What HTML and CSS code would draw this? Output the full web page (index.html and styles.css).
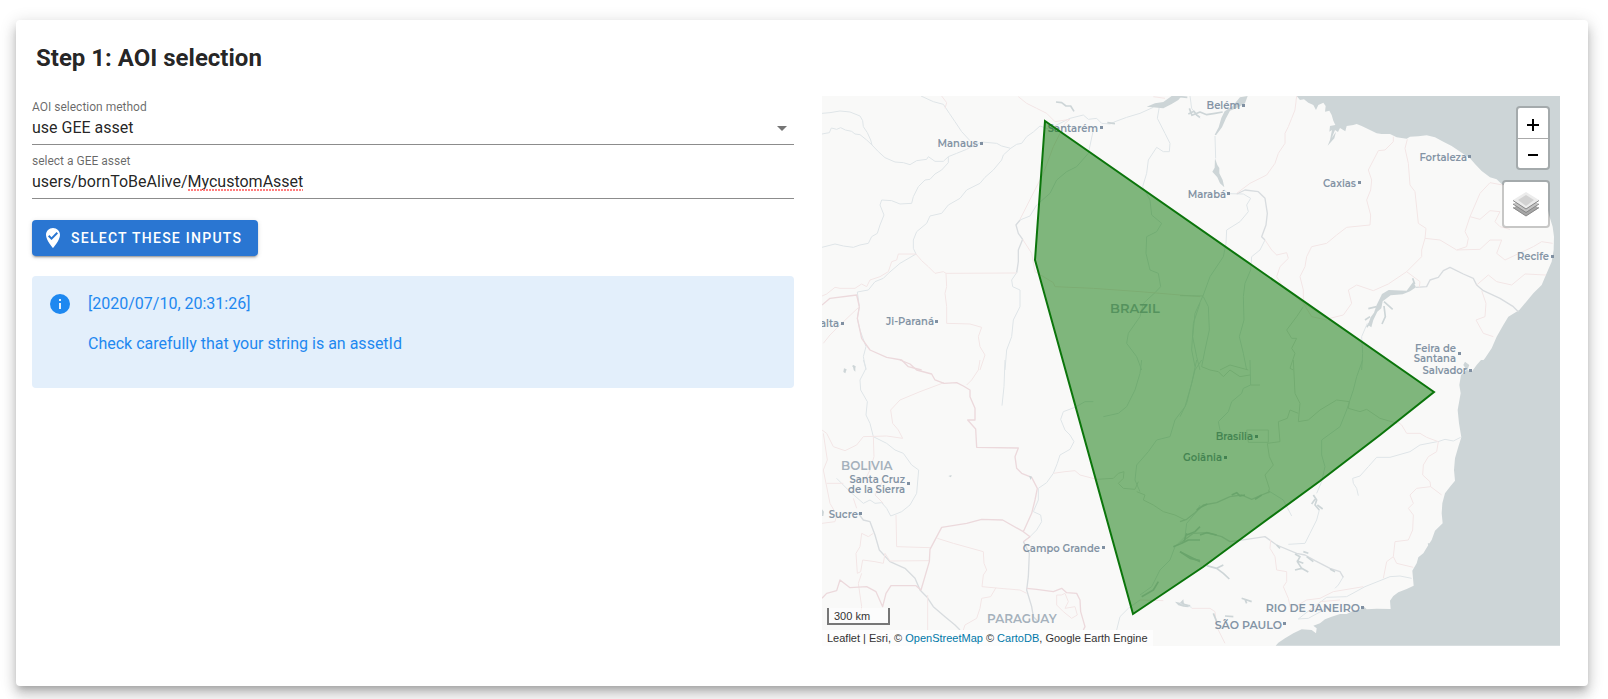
FILE: index.html
```html
<!DOCTYPE html>
<html lang="en">
<head>
<meta charset="utf-8">
<title>Step 1: AOI selection</title>
<link rel="stylesheet" href="styles.css">
</head>
<body>
<main class="card">
  <h1 class="card-title">Step 1: AOI selection</h1>
  <div class="columns">
    <section class="form">
      <div class="field">
        <label class="field-label" for="method">AOI selection method</label>
        <select class="field-input" id="method"><option>use GEE asset</option></select>
        <svg class="caret" viewBox="0 0 10 5" aria-hidden="true"><path d="M0 0h10L5 5z"/></svg>
      </div>
      <div class="field">
        <label class="field-label" for="asset">select a GEE asset</label>
        <input class="field-input" id="asset" type="text" value="users/bornToBeAlive/MycustomAsset">
        <span class="spell-mark"></span>
      </div>
      <button class="submit" type="button">
        <svg class="submit-icon" viewBox="0 0 24 24" aria-hidden="true"><path d="M12 2C8.1 2 5 5.1 5 9c0 5.300 7 13 7 13s7-7.700 7-13c0-3.900-3.100-7-7-7m-1.500 12L7 10.500l1.400-1.400 2.100 2.100 5.100-5.200L17 7.400z"/></svg>
        <span>SELECT THESE INPUTS</span>
      </button>
      <div class="alert" role="alert">
        <svg class="alert-icon" viewBox="0 0 24 24" aria-hidden="true"><path d="M13 9h-2V7h2m0 10h-2v-6h2m-1-9A10 10 0 0 0 2 12a10 10 0 0 0 10 10 10 10 0 0 0 10-10A10 10 0 0 0 12 2z"/></svg>
        <div class="alert-body">
          <p>[2020/07/10, 20:31:26]</p>
          <p>Check carefully that your string is an assetId</p>
        </div>
      </div>
    </section>

    <section class="map" aria-label="Map">
      <svg class="map-canvas" viewBox="822 96 738 550" preserveAspectRatio="xMidYMid slice">
        <!-- north-west -->
        <g transform="translate(820 90) scale(.33333)">
          <g class="river">
            <path d="M6 70L30 68 60 63 90 66 120 78 128 92 130 110 142 128 152 150 156 165"/>
            <path d="M6 132L28 128 34 114 50 118 62 113 76 120 95 124 105 132 120 134 140 150 156 165 175 185 195 203 225 216 250 218 270 224 290 212 320 208 325 200 345 214 370 214 385 200 410 190 440 178 450 172 485 156 530 160 545 168 572 175 590 163 605 160 620 140 640 126 660 108 685 117 720 100 750 85 790 75 805 88 830 85 845 100 870 102 885 95 920 82 960 70 1000 52"/>
            <path d="M303 18L340 35 370 43 388 70 405 95 425 125 450 152"/>
            <path d="M385 200L385 218 365 240 345 252 330 268 315 270 295 290 280 320 275 340 240 342 215 332 185 330 180 345 192 375 180 405 172 430 155 440 145 460 120 465 100 472 70 468 45 462 6 472"/>
            <path d="M572 175L550 195 545 210 520 240 495 262 480 280 440 300 420 325 385 345 365 370 330 378 320 400 290 425 280 450 280 475 288 492 240 520 205 550 190 565 165 575 145 600 112 606 118 650 112 685 120 720 138 770"/>
            <path d="M820 120L805 190 770 230 740 245 710 270 690 310 650 345 630 378 600 390 588 405"/>
            <path class="strong" d="M600 390L588 405 595 430 608 448 595 480 595 515 590 548"/>
            <path d="M590 548L575 570 578 590 600 600 600 650 580 690 575 740 560 780 555 840M138 770L130 800 138 840"/>
            <path d="M1018 50L1012 85 1035 130 1050 160 1048 185 1030 185 1010 172 985 210 980 250 968 290 990 330 995 375 1025 400 1010 425 980 440 978 490 990 540 1015 550 1022 590 1005 608 970 640 960 680 925 730 920 760 950 800 965 840M1110 18L1115 55 1130 75 1140 85"/>
            <path d="M1140 640L1120 700 1115 780 1125 830"/>
          </g>
          <g class="border">
            <path d="M365 18L380 38 375 55M595 20L620 40 650 55 680 70 705 95 750 88 735 100 700 170 670 250 600 388M608 448L635 490 645 545 700 578 705 590 820 595 960 605 1140 620M1000 20L1035 25"/>
            <path d="M288 492L235 492 230 510 215 515 205 545 180 560 150 570 140 590 125 582 105 595 60 595 45 592 20 612 6 618M288 492L305 512 325 530 345 550 370 545 378 550 590 549M378 550L380 590 375 610 380 650 380 700 450 702 485 712 475 740 480 770 495 795 480 840"/>
            <path class="strong" d="M6 645L30 625 110 615 118 650 112 685 125 745 150 780 200 802 245 810 265 830 305 840"/>
            <path d="M118 650L60 705 30 735 10 760"/>
          </g>
          <path class="water" d="M980 50L1005 40 1030 36 1055 18 1085 18 1075 30 1055 42 1030 55z"/>
          <path class="river-thick" d="M708 36L725 38 738 48 752 48 762 64M1105 72L1122 64 1130 75 1140 82M862 98L885 101M98 828L106 832"/>
        </g>

        <!-- north-east -->
        <g transform="translate(1180 90) scale(.33333)">
          <path class="ocean" d="M350 18L360 30 372 28 385 38 400 45 408 60 415 45 430 38 437 48 435 65 448 62 455 75 460 92 466 105 450 108 448 125 456 120 450 150 443 167 463 145 468 125 455 145 465 120 474 126 480 114 496 124 500 108 520 105 530 102 545 108 570 120 590 130 605 132 630 132 650 142 680 146 690 140 715 139 740 136 765 142 790 155 815 168 845 188 870 205 885 222 905 243 930 262 950 268 968 285 1040 290 1090 300 1100 340 1107 375 1118 410 1122 440 1121 480 1115 515 1100 550 1085 585 1060 610 1050 622 1018 660 985 680 970 705 950 740 935 775 915 805 890 835 880 840H1140V18z"/>
          <path class="water" d="M203 18L195 40 175 52 150 62 138 85 126 112 108 136 104 134 116 112 124 84 134 64 158 48 180 22zM105 205L112 225 118 234 118 250 128 270 133 292 120 280 112 262 97 245 104 233zM700 575L708 592 690 604 668 613 632 616 608 634 604 655 592 665 580 690 574 712 564 705 572 682 582 668 590 645 606 612 626 600 680 602z"/>
          <path class="river-thick" d="M28 55L36 76 60 66 80 74 105 70 128 66M0 20L22 22M698 565L704 582M612 635L638 658M612 648L616 680 606 702M570 680L555 690M575 690L560 712M590 650L565 656M925 820L945 818 960 830"/>
          <g class="river">
            <path d="M105 138L107 205M133 300L145 311 190 312 212 325 200 345 205 365 180 395 140 420 138 460 130 500 90 560 70 615 45 670 38 740 50 800 60 840"/>
            <path class="strong" d="M170 312L195 300 235 305 255 325 262 370 258 405 245 440 255 450"/>
            <path d="M255 450L240 480 215 500 212 540 195 580 190 620 192 690 178 740 190 790 200 840M70 620L85 650 88 720 75 780 65 830M562 700L545 740 548 790 545 840"/>
            <path class="strong" d="M708 592L740 590 750 570 775 562 790 542 810 532 850 552 880 565 890 585 910 602 960 625 1000 650 1015 665"/>
          </g>
          <g class="border">
            <path d="M350 18L345 60 335 85 325 110 315 130 315 160 295 190 285 220 260 255 210 280 170 310M255 450L275 480 290 495 320 488 325 505 300 530 290 560 305 585 370 640 440 685M640 140L640 155 615 180 595 182 565 240 575 270 572 300 560 330 572 375 570 405 500 412 470 435 440 460 395 470 380 500 375 530 360 560 370 600 370 640M682 148L675 175 685 220 690 285 705 305 715 400 738 415 735 445 725 480 725 500 680 545 625 582 580 602 530 585 505 600 515 640 490 675 450 685"/>
            <path d="M735 445L780 450 830 480 860 470 865 445 855 425 870 380 900 310 930 278 968 285M870 380L900 388 930 362 960 365 945 395 960 410 990 418M830 480L900 478 930 450 965 450 950 490 975 510 1060 470 1085 455 1118 460M680 545L720 575 718 592M890 585L925 555 950 575 995 585 1035 552 1098 555M905 602L918 640 915 680 888 690 910 730 940 740M370 640L395 680 440 690"/>
          </g>
          <g class="border gray"><path d="M0 617L70 618M370 650L350 680 320 720 335 745 350 745 335 775 345 790 330 835 340 840M120 840L150 825 205 840"/></g>
        </g>

        <!-- south-west -->
        <g transform="translate(820 360) scale(.33333)">
          <g class="river">
            <path d="M130 0L138 25 120 60 122 90 142 125 138 165 150 190 160 230 200 250 225 270 250 280 275 315 296 330 290 400 270 435 245 455 228 462 212 468 200 445 185 428 165 430 150 420 130 430 90 395 50 355"/>
            <path d="M555 0L552 80 546 137M820 125L795 125 765 142 730 155 722 178 735 210 750 225 762 245 750 268 720 285 712 310 700 340 680 368 655 385 655 420 640 455 662 465 665 485 650 510 630 530 610 545M965 0L960 40 945 90 920 140 895 160 850 170"/>
            <path class="strong" d="M115 460L130 480 150 485 165 525 178 570 210 605 255 625 285 655 300 690 320 710 340 740 375 770 405 795 420 810M610 545L628 580 625 650 620 690 635 740 640 770 655 785"/>
            <path d="M890 810L900 770 925 745 960 720"/>
            <path d="M1130 0L1115 70 1095 140 1065 180 1050 230 1010 240 985 275 950 315 945 360 960 395M1140 435L1130 455 1100 490 1095 530 1065 560 1050 600 1020 630 995 680 960 705"/>
          </g>
          <g class="border">
            <path d="M372 68L300 95 240 120 212 150 218 190 235 210 248 235 200 228 130 230 110 255 75 272 40 260 20 220 6 210M160 230L162 290 150 330 135 360M10 220L22 300 10 330 22 390 30 430 50 465 45 485 6 490M20 370L70 370M228 465L230 560 330 563M210 603L328 602M160 520L145 530 125 520 120 560 108 580 112 640 122 635 128 600 165 605 190 610 195 580 210 603M125 640L115 670 125 740 120 770M323 705V810M352 535L400 550 490 575 492 610 500 630 490 645 486 680 540 685 600 690 620 700M528 683L512 710 485 715 480 745 470 775 435 795 430 810M480 0L475 30 455 60 440 75M100 415L110 445M190 360L165 405 190 430"/>
            <path class="strong" d="M240 0L270 12 290 30 335 42 345 60 372 70 410 68 430 78 450 90 450 110 465 145 465 180 443 180 467 207 470 262 595 264 585 290 590 325 605 340 635 352 652 385 645 420 635 460 610 515 548 480 485 478 440 490 365 502 330 568 328 605 303 690 288 677 213 677 198 700 188 740 168 695 140 680 90 683 60 660 50 692 20 700 6 715M610 515L630 530 610 545M620 685L650 688 700 695 725 685 740 698 770 700 780 720 782 755 795 800 790 810"/>
            <path d="M700 340L735 335 765 332 780 345 830 358M710 705L725 705 735 700 745 725 735 745 765 740 772 765 755 775 730 755 710 735zM960 720L1030 722"/>
          </g>
          <g class="border gray"><path d="M830 358L880 355 895 340 912 335 910 355 895 370 910 385 945 388 955 365M950 395L975 405 970 420 1000 435 1030 455 1065 465 1095 480"/></g>
          <path class="water" d="M72 25L80 28 76 40 70 36zM98 15L106 18 106 35 101 30zM385 348L395 345 393 352zM6 448L12 455 10 468 6 468zM1065 725L1080 728 1090 718 1092 732 1112 735 1105 742 1090 740 1075 736zM627 347L636 350 632 360z"/>
          <path class="river-thick" d="M1060 560L1085 550 1105 540 1140 540M1080 575L1110 595 1140 602M1100 525L1125 515 1140 500M965 710L1000 690 1015 665"/>
        </g>

        <!-- south-east -->
        <g transform="translate(1180 360) scale(.33333)">
          <path class="ocean" d="M903 0L890 15 875 35 862 30 868 15 855 5 850 15 860 30 843 45 838 75 842 100 833 150 837 190 844 232 835 260 825 295 822 330 825 362 810 380 795 400 787 430 785 460 788 490 765 512 755 540 745 555 730 580 715 592 710 610 697 632 701 677 680 687 655 697 640 708 630 722 632 747 590 746 560 748 550 738 540 750 520 752 500 762 480 762 455 770 435 778 420 790 400 797 410 805 408 820 395 810 365 808 340 820 315 835 295 848 287 857H1140V0z"/>
          <g class="river">
            <path d="M65 0L45 30 35 70 20 130 0 170"/>
            <path d="M210 0L212 75 190 85 185 100 155 125 145 155 115 185 120 210M548 0L530 50 520 90 500 150 480 200 425 240 425 285 435 320 425 365 410 400M418 450L410 480 390 520 375 550 325 553"/>
            <path d="M772 245L720 255 690 275 630 292 590 292 565 320 540 348 518 355 520 370 530 385 535 407M774 245L795 238 820 243 842 232M1 730L35 742M490 650L475 675 465 685M370 765L390 750 440 712 500 710 555 680 630 650 660 648 695 655M370 765L355 777 385 775 440 745M265 392L310 420 335 468"/>
            <path class="strong" d="M0 485L20 478 45 458 70 435 110 428 150 410 185 405 215 418 245 405 270 395M0 550L40 520 80 518 125 530 150 545 200 538 255 530 290 555 350 580 375 585 405 602 450 625 480 635 490 652"/>
          </g>
          <g class="border">
            <path d="M652 185L665 195 680 220 720 220 740 232 775 245 770 275 745 290 730 315 728 345 750 365 752 380 785 405M752 380L710 385 690 405 700 430 685 445 700 465 698 510 685 540 645 545 640 590 620 605 610 655M640 590L650 610 700 622M272 540L270 565 285 590 290 630 320 635 320 665 310 680 325 715 330 740M345 740L380 720 420 715 460 695 550 680M420 725L480 720M35 745L90 745 105 755 110 800 135 850"/>
          </g>
          <g class="border gray"><path d="M65 20L90 30 115 35 130 50 150 30 180 50 210 45M340 0L345 100 360 130 355 185 385 180 420 150 470 120 508 125 505 145 540 155 560 148 600 175 652 190M355 160L330 150 322 175 295 185 300 245 262 250 268 290 280 315 255 345 268 385 265 400M212 75L240 75M200 210H265V247H205z"/></g>
          <path class="river-thick" d="M50 450L65 440 82 432M155 405L170 398 180 408 195 405M225 418L245 405M60 525L80 518 110 525M0 575L30 590 60 605M5 730L25 738M400 405L410 420 405 435 418 450M405 418L395 432M412 435L428 447M80 617L110 625 130 640 148 657M110 625L130 615M185 715L215 725M195 718L200 730M345 582L360 590 352 605 365 625 385 636M350 602L370 610M345 630L365 625M370 575L385 580M380 590L400 605M450 627L465 635M100 760L110 785M290 555L300 565M135 768L160 770M745 550L750 558M12 545L20 520"/>
        </g>

        <g class="label country">
          <text class="home" x="1110" y="313">BRAZIL</text>
          <text x="841" y="470">BOLIVIA</text>
          <text x="987" y="623">PARAGUAY</text>
        </g>
        <g class="label big" text-anchor="end">
          <text x="1360" y="612">RIO DE JANEIRO</text>
          <text x="1282" y="629">SÃO PAULO</text>
        </g>
        <g class="label" text-anchor="end">
          <text x="978" y="147">Manaus</text>
          <text x="1098" y="132">Santarém</text>
          <text x="1240" y="109">Belém</text>
          <text x="1226" y="198">Marabá</text>
          <text x="1356" y="187">Caxias</text>
          <text x="1467" y="161">Fortaleza</text>
          <text x="1549" y="260">Recife</text>
          <text x="1456" y="352">Feira de</text>
          <text x="1456" y="362">Santana</text>
          <text x="1467" y="374">Salvador</text>
          <text x="934" y="325">Ji-Paraná</text>
          <text x="839" y="327">alta</text>
          <text x="1253" y="440">Brasília</text>
          <text x="1222" y="461">Goiânia</text>
          <text x="905" y="483">Santa Cruz</text>
          <text x="905" y="493">de la Sierra</text>
          <text x="858" y="518">Sucre</text>
          <text x="1100" y="552">Campo Grande</text>
        </g>
        <path class="town" d="M980 142h3v3h-3zM1100 126h3v3h-3zM1242 104h3v3h-3zM1227 192h3v3h-3zM1358 181h3v3h-3zM1468 155h3v3h-3zM1551 255h3v3h-3zM1458 352h3v3h-3zM1469 369h3v3h-3zM935 320h3v3h-3zM841 322h3v3h-3zM1255 435h3v3h-3zM1224 456h3v3h-3zM907 482h3v3h-3zM859 512h3v3h-3zM1102 546h3v3h-3zM1361 606h3v3h-3zM1283 622h3v3h-3z"/>
        <path class="aoi" d="M1045 121L1434 392 1380 435 1320 481 1253 530 1203 567 1133 614 1035 260z"/>
      </svg>

      <div class="map-controls">
        <div class="zoom">
          <button class="zoom-button" type="button" aria-label="Zoom in"><svg viewBox="0 0 12 12"><path d="M0 6h12M6 0v12"/></svg></button>
          <button class="zoom-button" type="button" aria-label="Zoom out"><svg viewBox="0 0 12 12"><path d="M1 6h10"/></svg></button>
        </div>
        <button class="layers" type="button" aria-label="Layers">
          <svg viewBox="0 0 26 26"><path d="M0 17l13-8 13 8-13 8z" fill="#a6a6a6"/><path d="M0 16.500l13 8.500 13-8.500" fill="none" stroke="#888"/><path d="M0 13l13-8 13 8-13 8z" fill="#c4c4c4"/><path d="M0 13l13 8.500 13-8.500" fill="none" stroke="#888"/><path d="M0 9l13-8 13 8-13 9z" fill="#ececec"/><path d="M5 9l8-5 8 5-8 6z" fill="#d2d2d2"/><path d="M0 9.500l13 8.500 13-8.500" fill="none" stroke="#888"/></svg>
        </button>
      </div>
      <div class="map-footer">
        <div class="scale">300 km</div>
        <div class="attribution">Leaflet | Esri, © <a href="#osm">OpenStreetMap</a> © <a href="#carto">CartoDB</a>, Google Earth Engine</div>
      </div>
    </section>
  </div>
</main>
</body>
</html>
```

FILE: styles.css
```css
* { box-sizing: border-box; }

body {
  margin: 0;
  padding: 20px 20px 13px 16px;
  background: #fff;
  color: rgba(0, 0, 0, .87);
  font-family: Roboto, sans-serif;
  font-size: 16px;
}

.card {
  padding: 20px 28px 40px 16px;
  border-radius: 4px;
  background: #fff;
  box-shadow: 0 5px 6px -3px rgba(0, 0, 0, .2), 0 9px 12px 1px rgba(0, 0, 0, .14), 0 3px 16px 2px rgba(0, 0, 0, .12);
}

.card-title {
  margin: 0 0 20px;
  padding: 2px 4px;
  font-size: 24px;
  line-height: 32px;
  font-weight: 700;
}

.columns {
  display: grid;
  grid-template-columns: 762fr 738fr;
  gap: 28px;
}

.form {
  display: flex;
  flex-direction: column;
  align-items: flex-start;
}

.field {
  position: relative;
  display: flex;
  flex-direction: column;
  width: 100%;
  height: 54px;
  padding-top: 3px;
}

.field-label {
  font-size: 12px;
  line-height: 16px;
  color: rgba(0, 0, 0, .6);
}

.field-input {
  width: 100%;
  height: 30px;
  margin: 0;
  padding: 0 0 5px;
  border: 0;
  border-bottom: 1px solid #8c8c8c;
  border-radius: 0;
  outline: 0;
  appearance: none;
  background: transparent;
  color: inherit;
  font: inherit;
}

.caret {
  position: absolute;
  right: 7px;
  top: 30px;
  width: 10px;
  height: 5px;
  fill: #757575;
  pointer-events: none;
}

.spell-mark {
  position: absolute;
  left: 156px;
  top: 39px;
  width: 115px;
  height: 2px;
  background: repeating-linear-gradient(90deg, #ff7d7d 0 2px, transparent 2px 3px);
}

.submit {
  display: flex;
  align-items: center;
  gap: 9px;
  height: 36px;
  margin: 16px 0 20px;
  padding: 0 16px 0 12px;
  border: 0;
  border-radius: 4px;
  background: #2a76d2;
  color: #fff;
  font: 500 14px/20px Roboto, sans-serif;
  letter-spacing: .09em;
  box-shadow: 0 3px 1px -2px rgba(0, 0, 0, .2), 0 2px 2px rgba(0, 0, 0, .14), 0 1px 5px rgba(0, 0, 0, .12);
}

.submit-icon {
  width: 24px;
  height: 24px;
  margin: 0 -3px;
  fill: currentColor;
}

.alert {
  display: flex;
  gap: 16px;
  width: 100%;
  padding: 16px;
  border-radius: 4px;
  background: #e3effb;
  color: #1e88f0;
  line-height: 24px;
}

.alert-icon {
  width: 24px;
  height: 24px;
  fill: currentColor;
}

.alert p { margin: 0 0 16px; }

.map {
  position: relative;
  background: #f9f9f8;
  font: 11px/16px "Liberation Sans", Arial, sans-serif;
  color: #333;
}

.map-canvas {
  display: block;
  width: 100%;
}

.ocean, .water { fill: #cdd5d7; }
.river path { fill: none; stroke: #dfe5e8; stroke-width: 3; }
.river .strong { stroke: #d8dcdf; stroke-width: 4; }
.river-thick { fill: none; stroke: #cdd5d7; stroke-width: 5; }
.border path { fill: none; stroke: #f3e6e6; stroke-width: 3; }
.border .strong { stroke: #ecd9dc; stroke-width: 4; }
.border.gray path { stroke: #dfe2e2; }
.river path, .border path, .river-thick { stroke-linejoin: round; }

.label {
  font: 600 10px Montserrat, Inter, sans-serif;
  fill: #8494a5;
}

.label.big { font-size: 11px; }
.label.country { font-size: 12px; fill: #a5b1bc; }
.label .home { font-size: 13px; }
.town { fill: #8090a2; }
.aoi { fill: #057300; fill-opacity: .5; stroke: #0b750b; stroke-width: 2; }

.map-controls {
  position: absolute;
  top: 10px;
  right: 10px;
  display: flex;
  flex-direction: column;
  align-items: flex-end;
  gap: 10px;
}

.zoom, .layers {
  border: 2px solid rgba(0, 0, 0, .2);
  border-radius: 4px;
  background: #fff;
  background-clip: padding-box;
}

.zoom-button {
  display: flex;
  align-items: center;
  justify-content: center;
  width: 30px;
  height: 31px;
  padding: 3px 0 0;
  border: 0;
  background: transparent;
}

.zoom-button:first-child { border-bottom: 1px solid #aaa; }
.zoom-button:last-child { height: 29px; }
.zoom-button svg { width: 12px; height: 12px; }
.zoom-button path { fill: none; stroke: #000; stroke-width: 2; }

.layers {
  width: 48px;
  height: 48px;
  padding: 9px;
}

.layers svg { display: block; width: 26px; height: 26px; }

.map-footer {
  position: absolute;
  left: 0;
  bottom: 0;
  display: flex;
  flex-direction: column;
  align-items: flex-start;
  gap: 5px;
}

.scale {
  width: 63px;
  height: 17px;
  margin-left: 5px;
  padding: 0 5px;
  border: 2px solid #777;
  border-top: 0;
  background: rgba(255, 255, 255, .5);
}

.attribution {
  padding: 0 5px;
  background: rgba(255, 255, 255, .7);
}

.attribution a { color: #0078a8; text-decoration: none; }
```
